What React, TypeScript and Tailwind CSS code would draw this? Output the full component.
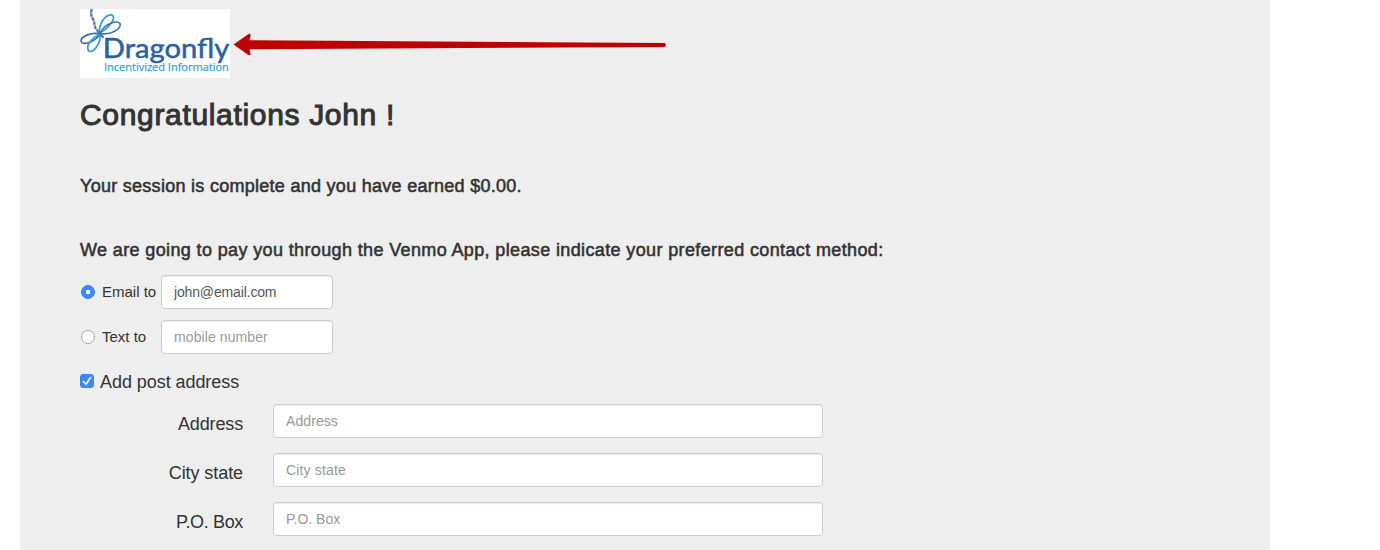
import React, { useState } from "react";

const inputClass =
  "block h-[34px] rounded-[4px] border border-[#cccccc] bg-white px-3 text-[14px] leading-5 text-[#555555] shadow-[inset_0_1px_1px_rgba(0,0,0,0.075)] outline-none placeholder:text-[#999999] placeholder:opacity-100";

function Logo() {
  return (
    <svg width="150" height="69" viewBox="0 0 150 69" className="block overflow-visible bg-white" role="img">
      <g fill="none" strokeLinecap="round">
        <path d="M11.800 0 C10.500 4 11 7 13 10 C15 14 14 17 16 20 L20 24.500" stroke="#5b7dae" strokeWidth="2.400" strokeDasharray="3.600 0.700" strokeLinecap="butt" />
        <path d="M19.500 24 C18.500 14 26 5 32 6 C37 9 29 19 19.500 24" stroke="#35a3d8" strokeWidth="1.800" />
        <path d="M20 24.500 C25 14 37 11 40 14.500 C41.500 20 31 26.500 20 24.500" stroke="#3a74b4" strokeWidth="1.600" />
        <path d="M20 25 C12 23 1 27 1 32 C1.500 37 14 34 20 25" stroke="#3468aa" strokeWidth="1.600" />
        <path d="M20 25 C11 29 5 38 9 42 C14 44.500 21 34 20 25" stroke="#35a3d8" strokeWidth="1.800" />
        <path d="M18.500 23 L23 28" stroke="#3a74b4" strokeWidth="2" />
      </g>
      <text x="22.800" y="49" textLength="126.500" lengthAdjust="spacingAndGlyphs" fontSize="27" fill="#2c5fa3" stroke="#2c5fa3" strokeWidth="0.5" className="font-['Lato',sans-serif]">Dragonfly</text>
      <text x="24" y="62" textLength="124.800" lengthAdjust="spacingAndGlyphs" fontSize="11.300" fill="#35a3d8" stroke="#35a3d8" strokeWidth="0.25" className="font-['Open_Sans',sans-serif]">Incentivized Information</text>
    </svg>
  );
}

function Radio({ checked, onSelect, label }: { checked: boolean; onSelect: () => void; label: string }) {
  return (
    <button type="button" role="radio" aria-checked={checked} onClick={onSelect} className="flex w-[81px] items-center gap-[7px] pl-px text-[15px] leading-5 whitespace-nowrap">
      <svg width="14" height="14" viewBox="0 0 14 14" className="shrink-0">
        <circle cx="7" cy="7" r="6.500" fill={checked ? "#3b88fd" : "#fff"} stroke={checked ? "#3b83f4" : "#a9a9a9"} />
        {checked && <circle cx="7" cy="7" r="2.200" fill="#fff" />}
      </svg>
      {label}
    </button>
  );
}

function AddressRow({ label, labelClass, fieldClass }: { label: string; labelClass: string; fieldClass: string }) {
  return (
    <div className="flex h-[34px]">
      <label className={`w-[163px] pt-[7px] text-right text-[18px] leading-[26px] ${labelClass}`}>{label}</label>
      <input placeholder={label} className={`${inputClass} ml-[30px] w-[550px] ${fieldClass}`} />
    </div>
  );
}

export default function App() {
  const [method, setMethod] = useState("email");
  const [post, setPost] = useState(true);
  return (
    <div className="h-[550px] overflow-hidden bg-white pl-5 font-['Liberation_Sans',Arial,sans-serif] text-[#333333]">
      <main className="h-full w-[1250px] bg-[#eeeeee] pt-[9px] pl-[60px]">
        <div className="flex h-[69px] items-start">
          <Logo />
          <svg width="440" height="24" viewBox="0 0 440 24" className="mt-6 ml-[3px] block">
            <path d="M.5 11.500 L16 .8 Q18 .5 17.500 3 L16.500 7.200 L432 10 Q433.500 12 432 14 L16.500 16.300 L17.500 20.500 Q18 23 15.500 22 Z" fill="#bd0202" />
          </svg>
        </div>
        <h1 className="mt-5 text-[30px] leading-[33px] tracking-[0.67px] whitespace-nowrap [-webkit-text-stroke:1px_#333]">Congratulations John !</h1>
        <p className="mt-[45px] text-[18px] leading-5 tracking-[0.28px] whitespace-nowrap [-webkit-text-stroke:0.55px_#333]">Your session is complete and you have earned $0.00.</p>
        <p className="mt-11 text-[18px] leading-5 tracking-[0.37px] whitespace-nowrap [-webkit-text-stroke:0.55px_#333]">We are going to pay you through the Venmo App, please indicate your preferred contact method:</p>
        <div className="mt-[15px] flex flex-col gap-[11px]">
          <div className="flex">
            <Radio checked={method === "email"} onSelect={() => setMethod("email")} label="Email to" />
            <input defaultValue="john@email.com" className={`${inputClass} w-[172px] tracking-[-0.15px]`} />
          </div>
          <div className="flex">
            <Radio checked={method === "text"} onSelect={() => setMethod("text")} label="Text to" />
            <input placeholder="mobile number" className={`${inputClass} w-[172px] tracking-[0.09px]`} />
          </div>
        </div>
        <button type="button" role="checkbox" aria-checked={post} onClick={() => setPost(!post)} className="mt-[15px] flex h-[26px] items-center gap-[6px] text-[18px] leading-[26px] tracking-[-0.06px]">
          <svg width="14" height="14" viewBox="0 0 14 14" className="-mt-[2px]">
            <rect x=".5" y=".5" width="13" height="13" rx="2.500" fill={post ? "#3b88fd" : "#fff"} stroke={post ? "#3b83f4" : "#a9a9a9"} />
            {post && <path d="M3.300 7.500 L5.900 10.300 L10.600 3.500" fill="none" stroke="#fff" strokeWidth="1.600" strokeLinecap="round" strokeLinejoin="round" />}
          </svg>
          Add post address
        </button>
        <div className="mt-[9px] flex flex-col gap-[15px]">
          <AddressRow label="Address" labelClass="tracking-[-0.15px]" fieldClass="tracking-[0.08px]" />
          <AddressRow label="City state" labelClass="tracking-[-0.08px]" fieldClass="tracking-[0.15px]" />
          <AddressRow label="P.O. Box" labelClass="tracking-[-0.35px]" fieldClass="tracking-[0px]" />
        </div>
      </main>
    </div>
  );
}
